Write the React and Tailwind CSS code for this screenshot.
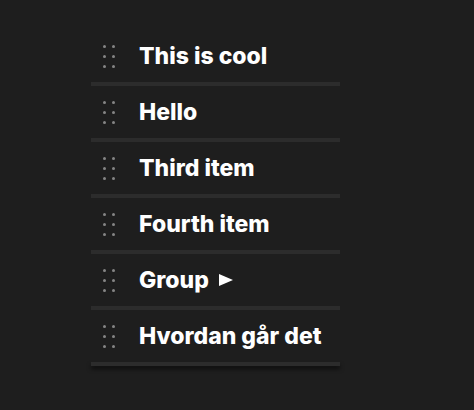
const items = [
  { id: 1, label: "This is cool" },
  { id: 2, label: "Hello" },
  { id: 3, label: "Third item" },
  { id: 4, label: "Fourth item" },
  { id: 5, label: "Group", group: true },
  { id: 6, label: "Hvordan går det" },
];

function Grip() {
  return (
    <div className="grid grid-cols-2 gap-x-[6px] gap-y-[7px] w-[12px]">
      {[0, 1, 2, 3, 4, 5].map((i) => (
        <span key={i} className="w-[3px] h-[3px] rounded-full bg-[#858585]" />
      ))}
    </div>
  );
}

export default function App() {
  return (
    <div className="w-[474px] h-[410px] bg-[#1e1e1e] pt-[30px] pl-[91px]">
      <ul className="w-[249px]">
        {items.map((item, i) => (
          <li key={item.id}>
            <div className="flex items-center h-[52px] pl-[12px]">
              <Grip />
              <span
                className="flex items-center ml-[24px] text-white text-[23px] font-extrabold leading-none"
                style={{ fontFamily: "Inter, sans-serif" }}
              >
                {item.label}
                {item.group && (
                  <svg className="ml-[10px]" width="14" height="12" viewBox="0 0 14 12">
                    <path d="M0 0 L14 6 L0 12 Z" fill="white" />
                  </svg>
                )}
              </span>
            </div>
            <div
              className={
                i === items.length - 1
                  ? "h-[4px] bg-[#2c2c2c] shadow-[0_3px_4px_rgba(0,0,0,0.6)]"
                  : "h-[4px] bg-[#2c2c2c]"
              }
            />
          </li>
        ))}
      </ul>
    </div>
  );
}
